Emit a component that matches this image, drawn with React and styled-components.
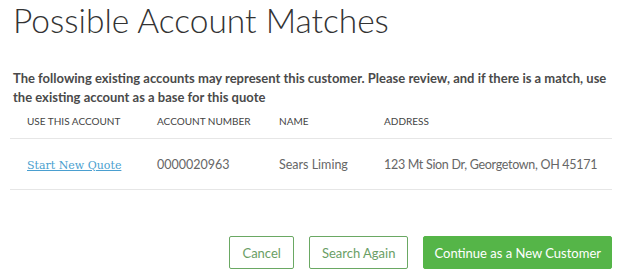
import styled, { createGlobalStyle } from "styled-components";

const GlobalStyle = createGlobalStyle`
  body {
    margin: 0;
    background: #fff;
    font-family: Lato, "Open Sans", sans-serif;
    color: #444;
  }
`;

const accounts = [
  {
    number: "0000020963",
    name: "Sears Liming",
    address: "123 Mt Sion Dr, Georgetown, OH 45171",
  },
];

export default function App() {
  return (
    <>
      <GlobalStyle />
      <Page>
        <Title>Possible Account Matches</Title>
        <Intro>
          The following existing accounts may represent this customer. Please
          review, and if there is a match, use the existing account as a base
          for this quote
        </Intro>
        <Table>
          <HeadRow>
            <HeadCell>Use this account</HeadCell>
            <HeadCell>Account Number</HeadCell>
            <HeadCell>Name</HeadCell>
            <HeadCell>Address</HeadCell>
          </HeadRow>
          {accounts.map((a) => (
            <Row key={a.number}>
              <Cell>
                <QuoteLink href="#">Start New Quote</QuoteLink>
              </Cell>
              <Cell>{a.number}</Cell>
              <Cell>{a.name}</Cell>
              <Cell $tight>{a.address}</Cell>
            </Row>
          ))}
        </Table>
        <Actions>
          <Button>Cancel</Button>
          <Button>Search Again</Button>
          <Button $primary>Continue as a New Customer</Button>
        </Actions>
      </Page>
    </>
  );
}

const Page = styled.div`
  width: 602px;
  padding: 0 0 0 10px;
`;

const Title = styled.h1`
  margin: 0;
  padding: 2px 0 0 3px;
  font-size: 33.5px;
  font-weight: 300;
  line-height: 36px;
  color: #333;
`;

const Intro = styled.p`
  margin: 31px 0 0 3px;
  font-size: 13px;
  font-weight: 700;
  line-height: 19px;
  color: #4a4a4a;
`;

const Table = styled.div`
  margin-top: -3px;
`;

const cols = "130px 122px 105px 1fr";

const HeadRow = styled.div`
  display: grid;
  grid-template-columns: ${cols};
  height: 34px;
  align-items: center;
  border-bottom: 1px solid #e6e6e6;
`;

const HeadCell = styled.div`
  padding-left: 17px;
  font-size: 10px;
  text-transform: uppercase;
  color: #444;
`;

const Row = styled.div`
  display: grid;
  grid-template-columns: ${cols};
  height: 50px;
  align-items: center;
  border-bottom: 1px solid #e6e6e6;
`;

const Cell = styled.div`
  padding-left: 17px;
  font-size: 12.5px;
  letter-spacing: ${(p) => (p.$tight ? "-0.3px" : "0")};
  color: #666;
  white-space: nowrap;
`;

const QuoteLink = styled.a`
  font-family: "DejaVu Serif", serif;
  font-size: 11px;
  color: #4a9fd0;
  text-decoration: underline;
`;

const Actions = styled.div`
  display: flex;
  justify-content: flex-end;
  gap: 15px;
  margin-top: 46px;
`;

const Button = styled.button`
  height: 33px;
  padding: 0 ${(p) => (p.$primary ? "10px" : "12px")};
  font-family: Lato, sans-serif;
  font-size: 13px;
  border-radius: 2px;
  cursor: pointer;
  border: 1px solid ${(p) => (p.$primary ? "#55b548" : "#6aa863")};
  background: ${(p) => (p.$primary ? "#55b548" : "#fff")};
  color: ${(p) => (p.$primary ? "#fff" : "#6a9e65")};
`;
